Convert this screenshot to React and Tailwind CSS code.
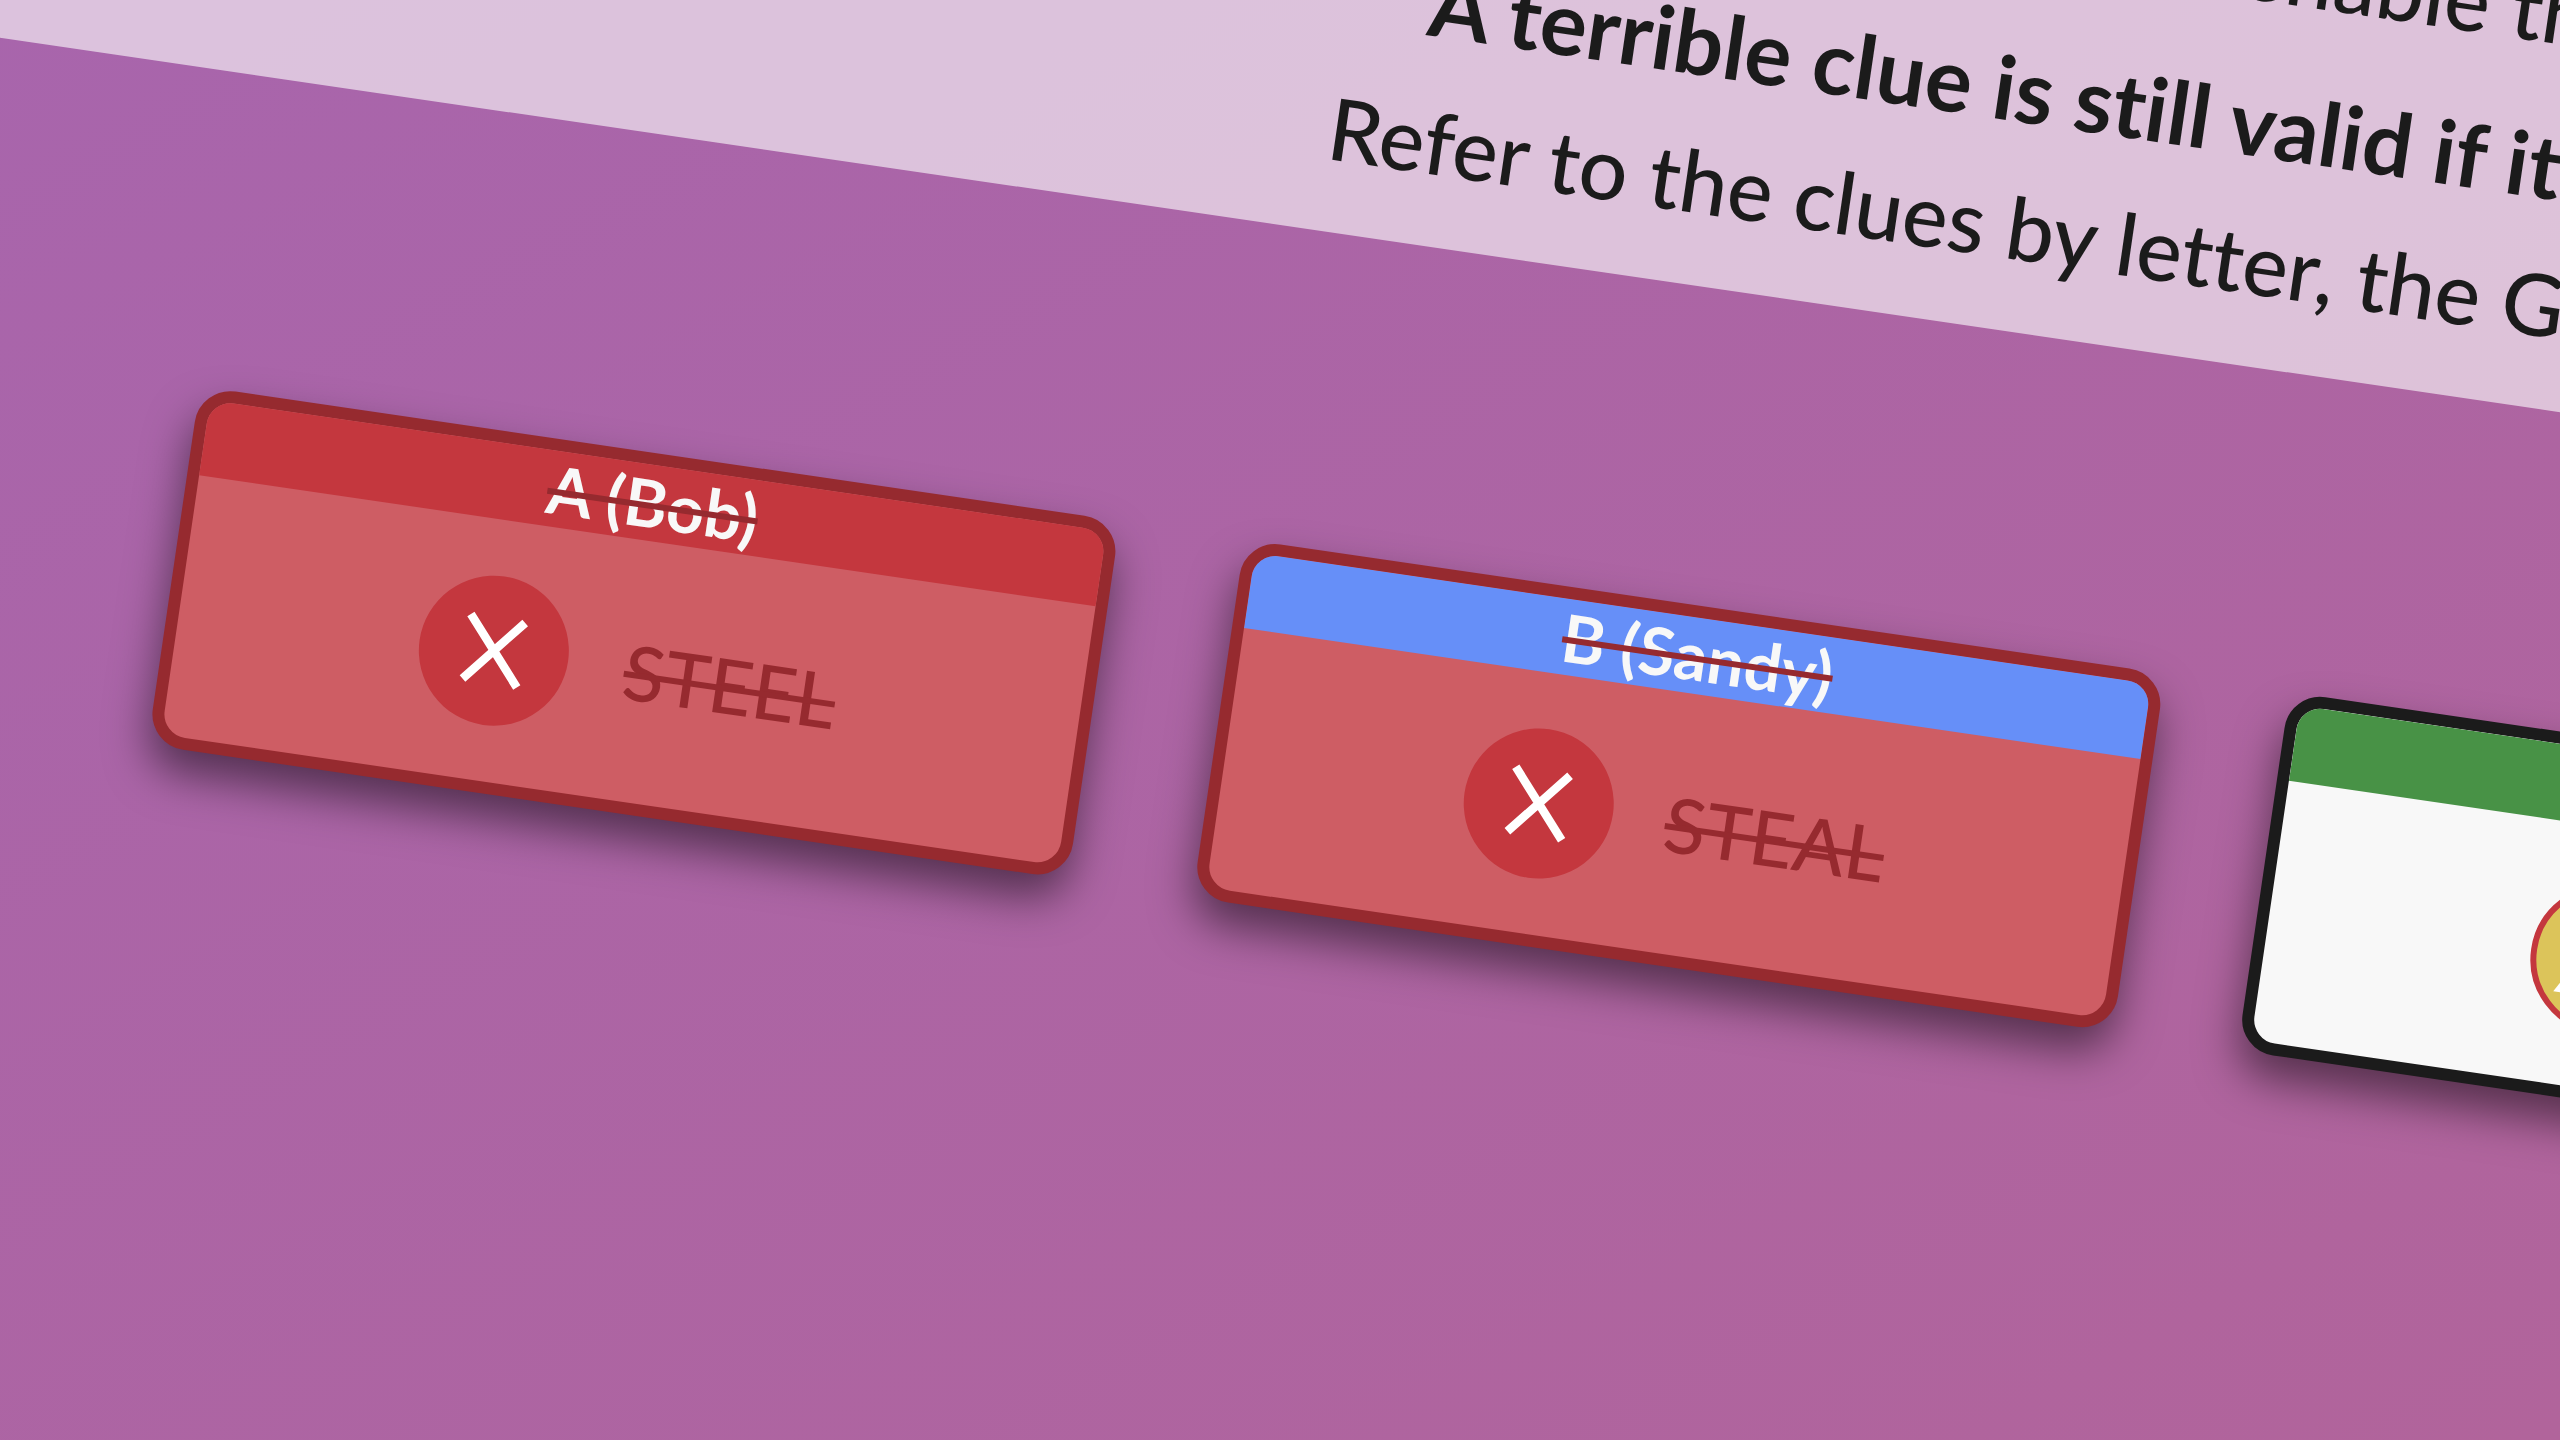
import React from "react";

const CARDS = [
  { id: "a", title: "A (Bob)", word: "STEEL", status: "cancelled", head: "bg-[#c4373e]" },
  { id: "b", title: "B (Sandy)", word: "STEAL", status: "cancelled", head: "bg-[#668ff8]" },
  { id: "c", title: "", word: "", status: "warning", head: "bg-[#489246]" },
];

function CrossIcon() {
  return (
    <span className="flex size-[150px] shrink-0 items-center justify-center rounded-full bg-[#c4373e]">
      <svg viewBox="0 0 150 150" className="size-full" fill="none" stroke="#fff" strokeWidth="8.5" aria-hidden="true">
        <path d="M47 42 L103 108 M102 43 L48 107" />
      </svg>
    </span>
  );
}

function WarningIcon() {
  return (
    <span className="flex size-[150px] shrink-0 items-center justify-center rounded-full border-[6px] border-[#c4373e] bg-[#dcc45a]">
      <svg viewBox="0 0 138 138" className="size-full" fill="#fff" aria-hidden="true">
        <path d="M69 26 L116 108 H22 Z" />
      </svg>
    </span>
  );
}

function ClueCard({ card }) {
  const cancelled = card.status === "cancelled";
  return (
    <article
      className={`flex w-[930px] shrink-0 flex-col overflow-hidden rounded-[36px] border-[12px] shadow-[0_24px_44px_rgba(0,0,0,0.5)] ${
        cancelled ? "border-[#962a2f] bg-[#ce5d64] text-[#962a2f]" : "border-[#1b1b1b] bg-[#f8f8f8] text-[#1b1b1b]"
      }`}
    >
      <h2 className={`flex h-[76px] items-center justify-center text-[66px] leading-[72px] font-bold ${card.head}`}>
        <s className="decoration-[#962a2f] decoration-[6px]">
          <span className="text-[#f8f8f8]">{card.title}</span>
        </s>
      </h2>
      <div className="flex h-[262px] items-center justify-center gap-[55px]">
        {cancelled ? <CrossIcon /> : <WarningIcon />}
        {card.word ? (
          <s className="flex w-[218px] justify-center text-[76px] leading-[96px] font-medium decoration-[6px]">{card.word}</s>
        ) : (
          <span className="w-[173px]" />
        )}
      </div>
    </article>
  );
}

export default function App() {
  return (
    <main className="h-screen w-full overflow-hidden bg-linear-to-br from-[#a865ac] to-[#b1649b] font-[Lato,sans-serif]">
      <div className="w-[130%] origin-top-left translate-x-[50px] translate-y-[-440px] rotate-[8.32deg]">
        <section className="flex h-[480px] flex-col justify-end overflow-hidden bg-[#f8f5f8]/65 pb-9 text-[86px] leading-[138px] font-medium whitespace-nowrap text-[#1b1b1b] [font-variant-ligatures:none]">
          <p className="pb-4 pl-[2228px]">enable th</p>
          <p className="pl-[1430px] text-[88px] font-bold">A terrible clue is still valid if it</p>
          <p className="pl-[1348px]">Refer to the clues by letter, the Gu</p>
        </section>
        <div className="flex gap-[126px] pt-[316px] pl-[268px]">
          {CARDS.map((card) => (
            <ClueCard key={card.id} card={card} />
          ))}
        </div>
      </div>
    </main>
  );
}
